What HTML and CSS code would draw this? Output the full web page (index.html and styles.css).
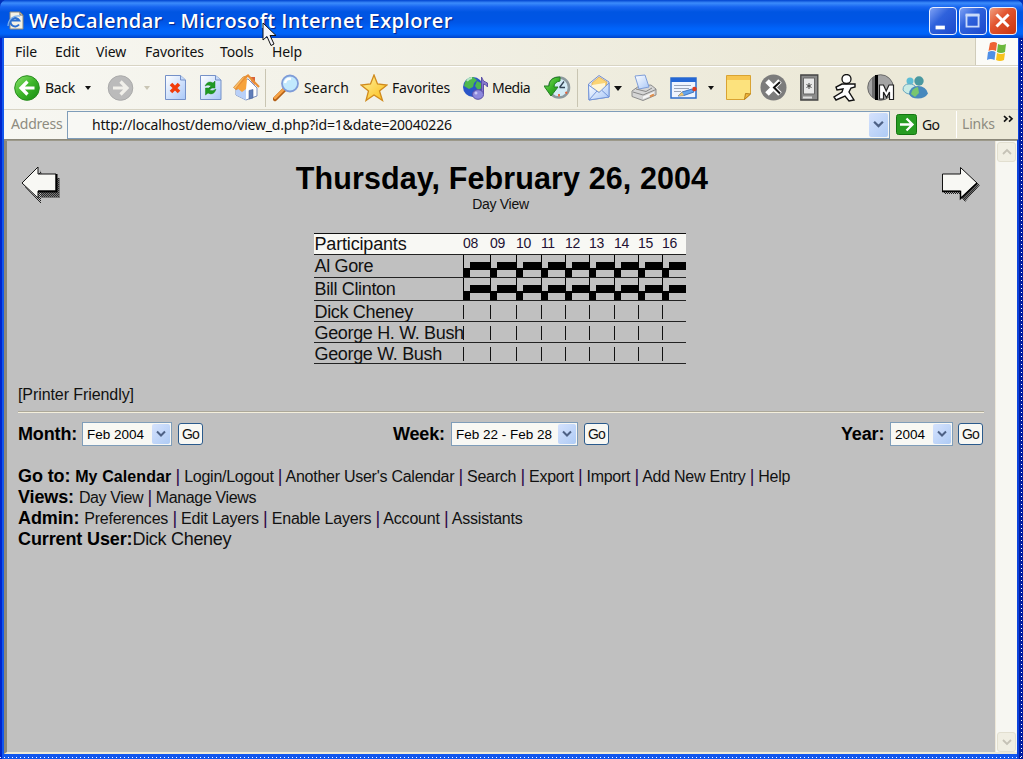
FILE: index.html
```html
<!DOCTYPE html>
<html lang="en">
<head>
<meta charset="utf-8">
<title>WebCalendar</title>
<link rel="stylesheet" href="styles.css">
</head>
<body>
<svg width="0" height="0" class="defs">
  <defs>
    <linearGradient id="green" x1="0" y1="0" x2="1" y2="1"><stop offset="0" stop-color="#8be36c"/><stop offset=".5" stop-color="#3cb529"/><stop offset="1" stop-color="#168a12"/></linearGradient>
    <linearGradient id="page" x1="0" y1="0" x2="1" y2="1"><stop offset="0" stop-color="#fff"/><stop offset="1" stop-color="#a9c8f8"/></linearGradient>
    <linearGradient id="gold" x1="0" y1="0" x2="1" y2="1"><stop offset="0" stop-color="#fff3a0"/><stop offset="1" stop-color="#fbbc16"/></linearGradient>
    <pattern id="dots" width="2" height="2" patternUnits="userSpaceOnUse"><path d="M0 0h1v1H0zM1 1h1v1H1z" fill="#222"/></pattern>
  </defs>
</svg>
<div class="window">
  <header class="titlebar">
    <svg class="app-icon" width="18" height="20" viewBox="0 0 18 20"><path d="M3 1h10l3 3v14H3z" fill="#f4f2e6" stroke="#8c8a80"/><path d="M13 1v3h3" fill="none" stroke="#666"/><path d="M12 13.500a4.600 4.200 0 1 1 .3-4H4" fill="none" stroke="#2a6fd0" stroke-width="2"/><path d="M1 15C1 8 7 4 13 5" fill="none" stroke="#7db1ee" stroke-width="1.300"/></svg>
    <h1 class="title">WebCalendar - Microsoft Internet Explorer</h1>
    <div class="controls">
      <span class="ctl"><svg viewBox="0 0 28 28"><path d="M6 19h10v4H6z" fill="#fff"/></svg></span>
      <span class="ctl"><svg viewBox="0 0 28 28"><path d="M7 8h13v12H7z" fill="none" stroke="#c9dafa" stroke-width="2"/><path d="M6 7.500h15" stroke="#c9dafa" stroke-width="3"/></svg></span>
      <span class="ctl close"><svg viewBox="0 0 28 28"><path d="M7 7l13 13M20 7L7 20" stroke="#fff" stroke-width="3.200"/></svg></span>
    </div>
  </header>
  <nav class="menubar">
    <span class="m1">File</span><span class="m2">Edit</span><span class="m3">View</span><span class="m4">Favorites</span><span class="m5">Tools</span><span class="m6">Help</span>
    <div class="brand"><svg width="24" height="22" viewBox="0 0 24 22"><path d="M5 2q4-2 7 0l-1 8q-4-2-7.500 0z" fill="#ee6334"/><path d="M13 3q4 2 8 0l-1 8q-4 2-8 0z" fill="#6bb83c"/><path d="M3 11q4-2 7.500 0l-1 8q-4-2-7.500 0z" fill="#4f8fe6"/><path d="M12 12q4 2 8 0l-1 7q-4 2-8 0z" fill="#f8c31c"/></svg></div>
  </nav>
  <div class="toolbar">
    <svg viewBox="0 0 28 28"><circle cx="13" cy="14" r="12.300" fill="url(#green)" stroke="#278c1d"/><path d="M20.500 14H8M13.500 7.500L7 14l6.500 6.500" fill="none" stroke="#fff" stroke-width="3.200"/></svg>
    <span class="lbl back">Back</span>
    <i class="caret"></i>
    <svg viewBox="0 0 28 28"><circle cx="13.500" cy="14" r="12.300" fill="#bbb" stroke="#aaa"/><path d="M6 14h13M13.500 7.500L20 14l-6.500 6.500" fill="none" stroke="#f1f0ea" stroke-width="3.200"/></svg>
    <i class="caret off"></i>
    <svg viewBox="0 0 28 28"><path d="M1.500 1.500h15l5 4.500v19.500h-20z" fill="url(#page)" stroke="#7591c8"/><path d="M16.500 1.500V6h5" fill="#c5daf9" stroke="#7591c8"/><path d="M7 10l8 8M15 10l-8 8" stroke="#f13c0c" stroke-width="3.600"/></svg>
    <svg viewBox="0 0 28 28"><path d="M.5 1.500h15l5.500 4.500v19.500H.5z" fill="url(#page)" stroke="#7591c8"/><path d="M15.500 1.500V6H21" fill="#c5daf9" stroke="#7591c8"/><path d="M5 12q3-6 8-3l2-2v7H9l2-2q-3-2-6 0zM16 15q-2 7-8 4l-2.500 2v-7h6l-2 2q3 2 6.500-1z" fill="#1f9a22" stroke="#16831a" stroke-width=".5"/></svg>
    <svg viewBox="0 0 28 28"><path d="M3 14l7-8 5-1 9 9v8l-11 4-10-5z" fill="#fff" stroke="#7a8fbe"/><path d="M3 14v7l10 5V14z" fill="#b9d0f8"/><path d="M16 16.500l4-1V24l-4 1z" fill="#5f7db9" stroke="#4a659c" stroke-width=".6"/><path d="M18 3h4v8l-4-4z" fill="#d8633a"/><path d="M.5 13.500L10 3l5-1.500L6 12l-3 3.500z" fill="#fbc067" stroke="#d08a3c" stroke-width=".8"/><path d="M3 15.500L12 4l3-2.500L26 13" fill="none" stroke="#e98f35" stroke-width="2.200"/><path d="M4 14l9-10 1 1-1 10-4 3z" fill="#f7a33b"/></svg>
    <i class="sep"></i>
    <svg viewBox="0 0 28 28"><path d="M2 25L12 15" stroke="#b35f16" stroke-width="4.500" stroke-linecap="round"/><path d="M2 24L11 15" stroke="#f7a345" stroke-width="2.500" stroke-linecap="round"/><circle cx="17" cy="9.500" r="8" fill="#c2e9fd" stroke="#7f9cd8" stroke-width="1.800"/><path d="M12 9q1-5 6-4" fill="none" stroke="#fff" stroke-width="2.500"/></svg>
    <span class="lbl search">Search</span>
    <svg viewBox="0 0 28 28"><path d="M14 1l3.500 9L27 11l-7.500 6 3 9.500-8.500-5.500-8 5.500 2.500-9.500L1 11l9.500-1z" fill="url(#gold)" stroke="#d08a1c" stroke-width="1.300"/></svg>
    <span class="lbl fav">Favorites</span>
    <svg viewBox="0 0 28 28"><circle cx="11" cy="13" r="10" fill="#2a55c8"/><path d="M3 8q3-5 8-5l4 3-3 3-1 4-4 2-5-3zM15 7l4 2 1 5-4 2-3-4z" fill="#4eb84d"/><path d="M5 7q2-3 5-3" stroke="#b7e7c5" stroke-width="2" fill="none"/><path d="M19.500 20V3q1 5 6 6v4q-2-3-4-3v10z" fill="#8577cf" stroke="#5b50a5"/><ellipse cx="16" cy="20.500" rx="5.500" ry="4.800" fill="#8d88dc" stroke="#5b50a5"/><circle cx="14" cy="19" r="1.500" fill="#c9c7f4"/></svg>
    <span class="lbl media">Media</span>
    <svg viewBox="0 0 28 28"><circle cx="15" cy="13.500" r="10" fill="#d4ecf6" stroke="#8d9a9f" stroke-width="2.600"/><path d="M15 20v2.500M21.500 18l1.500 1.500" stroke="#e6643b" stroke-width="1.800"/><path d="M16 3Q5 3 5 12H0l7 10 7-9h-4q0-5 6-6z" fill="url(#green)" stroke="#237f23"/><path d="M20 7.500l-4.500 6M15.500 13.500H21" fill="none" stroke="#345" stroke-width="1.300"/></svg>
    <i class="sep"></i>
    <svg viewBox="0 0 28 28"><path d="M1.500 10L12 1.500 22 8v15L2 26z" fill="#dce8fc" stroke="#7890cc"/><path d="M5 9l7-6 8 5-1 6-7 4-7-6z" fill="#fbd475" stroke="#d5a34d" stroke-width=".7"/><path d="M5 11l13-2v6l-6 3-7-5z" fill="#fff6d8"/><path d="M1.500 11l10.500 7.500L22 9v14L2 26z" fill="url(#page)" stroke="#7395d9"/><path d="M2 26l8-9M22 23l-7-6.500" fill="none" stroke="#7395d9"/></svg>
    <i class="caret big"></i>
    <svg viewBox="0 0 28 28"><path d="M1 17l7-5 12-1 5 4v6l-13 5.500-11-4z" fill="#d5d5d5" stroke="#8d8d8d"/><path d="M4 2l10-1 4 12-10 2z" fill="url(#page)" stroke="#7f9ed8"/><path d="M2 18l10 3 13-5.500M5 15l10 2.500 6-3.500" fill="none" stroke="#888"/><path d="M12 22.500l11-4.500v2.500l-11 4.500z" fill="#f6f6f6"/><path d="M19 22.500l4-2" stroke="#dd9050" stroke-width="2"/></svg>
    <svg viewBox="0 0 28 28"><path d="M1 4h25v20H1z" fill="#eef4ff" stroke="#2d6ccc" stroke-width="1.500"/><path d="M1 4h25v4H1z" fill="#2467d5"/><path d="M4 11.500h17M4 14.500h15M4 17.500h7" stroke="#9aa4b8"/><path d="M8 22l4-4 10-3 2 3-10 3.500z" fill="#65a5ed" stroke="#2c62b0" stroke-width=".8"/><path d="M8 22l4-4 2 3.500z" fill="#f0c46c"/><circle cx="24.500" cy="15" r="2.300" fill="#dc3d20"/></svg>
    <i class="caret note"></i>
    <svg viewBox="0 0 28 28"><path d="M.5 1.500h24V20l-6 5.500H.5z" fill="#fce27d" stroke="#d9a332"/><path d="M1 2h23v4H1z" fill="#f7c650"/><path d="M18.500 25.500l1-6 5 .5z" fill="#f1b63b" stroke="#b8801a"/></svg>
    <svg viewBox="0 0 28 28"><circle cx="13.500" cy="13.500" r="13" fill="#7c7c7c"/><path d="M7 7l13 13M20 7L7 20" stroke="#fff" stroke-width="5"/><path d="M20 8l-6 5.500 6 6" stroke="#111" stroke-width="2" fill="none"/></svg>
    <svg viewBox="0 0 28 28"><path d="M.8 1h17v25H.8z" fill="#8b8b8b" stroke="#444" stroke-width="1.300"/><path d="M3.500 4h11v16h-11z" fill="#e8e8e8" stroke="#666"/><path d="M9 9v6M6.500 10.500l5 3M11.500 10.500l-5 3" stroke="#444"/><path d="M3 23.500h9" stroke="#ddd" stroke-width="2"/></svg>
    <svg viewBox="0 0 28 28"><path d="M9 10l-6 3 1 3 6-1-1 3-8 5 2 3 9-4 4 5 5-1-5-8 2-4 4-1V10h-7z" fill="#fff" stroke="#111" stroke-width="1.400"/><circle cx="13.500" cy="5" r="4.500" fill="#fff" stroke="#111" stroke-width="1.300"/></svg>
    <svg viewBox="0 0 28 28"><circle cx="13.500" cy="13.500" r="12.800" fill="#a4a4a4" stroke="#555" stroke-width=".8"/><path d="M5 4l4-3v25l-4-3z" fill="#6c6c6c"/><path d="M9.500 1v25" stroke="#000" stroke-width="3"/><path d="M12.500 25V11h4l2.700 6 2.800-6h4.500v14.500h-4V18l-3 5.500-3-5.500v7z" fill="#fff" stroke="#222" stroke-width="1.200"/></svg>
    <svg viewBox="0 0 28 28"><circle cx="8" cy="7" r="3.500" fill="#5ebdd5"/><path d="M1 16q0-6 6-6t7 4l-3 6q-7 1-10-4z" fill="#c9ebe5" stroke="#6ba9c1"/><circle cx="17" cy="7" r="4.700" fill="#4a98a0"/><path d="M7 20q1-8 9-8 8 0 10 7.500-3 5-10 5-7 0-9-4.500z" fill="#4788bd"/><path d="M9 20q1-6 7-7l1 6-4 4z" fill="#79c66f"/></svg>
  </div>
  <div class="addressbar">
    <span class="addr-label">Address</span>
    <div class="addr-field"><span class="url">http://localhost/demo/view_d.php?id=1&amp;date=20040226</span><span class="drop"><svg viewBox="0 0 10 8"><path d="M1 1.500l4 4 4-4" fill="none" stroke="#4d6185" stroke-width="2"/></svg></span></div>
    <svg class="go-icon" viewBox="0 0 21 21"><rect x=".5" y=".5" width="20" height="20" rx="2" fill="#279c22" stroke="#137510"/><path d="M4 10.500h12M10.500 4.500l6 6-6 6" fill="none" stroke="#fff" stroke-width="2.300"/></svg>
    <span class="go-label">Go</span>
    <span class="links">Links</span><span class="more"><svg viewBox="0 0 11 8"><path d="M1 1l3 2.800L1 6.600M6 1l3 2.800-3 2.800" fill="none" stroke="#111" stroke-width="1.700"/></svg></span>
  </div>
  <div class="viewport">
    <main class="page">
      <div class="head">
        <svg width="40" height="40" viewBox="0 0 40 40"><path d="M4 22L20 6v7h18v19H20v7z" fill="url(#dots)"/><path d="M19 5l2 4v4h18v20H20V23z" fill="#333" opacity=".5"/><path d="M1 18L17 2v7h18v17H17v7z" fill="#f8f8f4" stroke="#111"/><path d="M17 26.500h18.500V9" fill="none" stroke="#000" stroke-width="2"/></svg>
        <div class="heading"><h2>Thursday, February 26, 2004</h2><p>Day View</p></div>
        <svg width="40" height="40" viewBox="0 0 40 40"><path d="M3 13h18V6l18 14-15 17-3-4v-4H3z" fill="url(#dots)"/><path d="M3 27h18v6l3 3 14-16-4-2-14 8z" fill="#333" opacity=".6"/><path d="M1.500 9h18V2.500L36 18 19.500 33.500V26h-18z" fill="#f8f8f4" stroke="#111"/><path d="M1 26.500h18.500v7L36 18" fill="none" stroke="#000" stroke-width="1.500"/></svg>
      </div>
      <div class="sched">
        <div class="row hdr"><b>Participants</b><i>08</i><i>09</i><i>10</i><i>11</i><i>12</i><i>13</i><i>14</i><i>15</i><i>16</i></div>
        <div class="row busy"><b>Al Gore</b><i></i><i></i><i></i><i></i><i></i><i></i><i></i><i></i><i></i></div>
        <div class="row busy"><b>Bill Clinton</b><i></i><i></i><i></i><i></i><i></i><i></i><i></i><i></i><i></i></div>
        <div class="row free"><b>Dick Cheney</b><i></i><i></i><i></i><i></i><i></i><i></i><i></i><i></i><i></i></div>
        <div class="row free"><b>George H. W. Bush</b><i></i><i></i><i></i><i></i><i></i><i></i><i></i><i></i><i></i></div>
        <div class="row free"><b>George W. Bush</b><i></i><i></i><i></i><i></i><i></i><i></i><i></i><i></i><i></i></div>
      </div>
      <p class="printer">[Printer Friendly]</p>
      <hr>
      <div class="forms">
        <div class="form"><strong class="month">Month:</strong><span class="select s1"><span>Feb 2004</span><em><svg viewBox="0 0 10 8"><path d="M1 1.500l4 4 4-4" fill="none" stroke="#4d6185" stroke-width="2"/></svg></em></span><button>Go</button></div>
        <div class="form"><strong class="week">Week:</strong><span class="select s2"><span>Feb 22 - Feb 28</span><em><svg viewBox="0 0 10 8"><path d="M1 1.500l4 4 4-4" fill="none" stroke="#4d6185" stroke-width="2"/></svg></em></span><button>Go</button></div>
        <div class="form"><strong class="year">Year:</strong><span class="select s3"><span>2004</span><em><svg viewBox="0 0 10 8"><path d="M1 1.500l4 4 4-4" fill="none" stroke="#4d6185" stroke-width="2"/></svg></em></span><button>Go</button></div>
      </div>
      <div class="navs">
        <p><strong>Go to:</strong> <span class="l1"><strong class="my">My Calendar</strong> <u>|</u> Login/Logout <u>|</u> Another User's Calendar <u>|</u> Search <u>|</u> Export <u>|</u> Import <u>|</u> Add New Entry <u>|</u> Help</span></p>
        <p><strong>Views:</strong> <span class="l2">Day View <u>|</u> Manage Views</span></p>
        <p><strong>Admin:</strong> <span class="l3">Preferences <u>|</u> Edit Layers <u>|</u> Enable Layers <u>|</u> Account <u>|</u> Assistants</span></p>
        <p><strong class="cu">Current User:</strong><span class="user">Dick Cheney</span></p>
      </div>
    </main>
    <div class="scroll"><span><svg viewBox="0 0 10 8"><path d="M1 6l4-4 4 4" fill="none" stroke="#c5c2b6" stroke-width="1.800"/></svg></span><span><svg viewBox="0 0 10 8"><path d="M1 2l4 4 4-4" fill="none" stroke="#c5c2b6" stroke-width="1.800"/></svg></span></div>
  </div>
</div>
<svg class="cursor" width="16" height="26" viewBox="0 0 16 26"><path d="M1 1v17l4-3.500 4 9 3-1.500-4-8.500h6z" fill="#f4f4f8" stroke="#111"/></svg>
</body>
</html>
```
FILE: styles.css
```css
* { box-sizing: border-box; }
body { margin: 0; width: 1023px; height: 759px; overflow: hidden; background: #0030b8; font-family: "Liberation Sans", Arial, sans-serif; color: #111; }
svg { display: block; }
.defs { position: absolute; }
h1, h2, p { margin: 0; }
i, b, em, u { font-style: normal; font-weight: 400; text-decoration: none; }
.window {
  width: 1023px; height: 759px; padding: 0 4px 5px 4px; display: flex; flex-direction: column; border-radius: 7px 7px 0 0;
  background:
    repeating-linear-gradient(90deg, #fff 0 1px, transparent 1px 4px) 0 757px / 1023px 1px no-repeat,
    repeating-linear-gradient(180deg, #fff 0 1px, transparent 1px 4px) 1021px 8px / 1px 751px no-repeat,
    linear-gradient(90deg, #0025cc 0 2px, #1257ee 2px 1017px, #0b42dc 1017px 1019px, #001ca0 1019px);
}
.titlebar { height: 38px; margin: 0 -4px; padding: 0 6px 0 7px; display: flex; align-items: center; border-radius: 7px 7px 0 0; background: linear-gradient(#0043cf 0, #3c8cfb 3px, #1765f0 7px, #0055e2 12px, #0055e6 22px, #0064fb 29px, #0063f8 34px, #0042c8 38px); }
.app-icon { margin: 3px 4px 0 0; }
.title { flex: 1; font: 600 20px/38px "Open Sans", sans-serif; letter-spacing: .36px; padding-top: 4px; color: #fff; text-shadow: 1px 1px 1px #0a1f80; white-space: nowrap; }
.controls { display: flex; gap: 2px; padding-top: 3px; }
.ctl { width: 28px; height: 28px; border: 1px solid #eaf0ff; border-radius: 4px; background: linear-gradient(135deg, #7fa2f5, #2f62dc 40%, #1c49cc); }
.ctl svg { width: 26px; height: 26px; }
.close { background: linear-gradient(135deg, #f0a081, #e2552f 40%, #c83310); }
.menubar { height: 28px; margin-right: 1px; padding-left: 11px; display: flex; align-items: center; font: 14px/27px "Noto Sans", sans-serif; letter-spacing: -.1px; background: linear-gradient(90deg, #f7f7f2, #ece9d8 80%); border-bottom: 1px solid #d8d4c4; }
.m1 { width: 40px; } .m2 { width: 41px; } .m3 { width: 49px; } .m4 { width: 75px; } .m5 { width: 52px; } .m6 { flex: 1; }
.brand { width: 43px; height: 27px; background: #fbfbf7; border-left: 1px solid #d0ccba; display: flex; align-items: center; justify-content: center; }
.toolbar {
  height: 44px; margin-right: 1px; padding-left: 10px; display: grid; align-items: center; border-top: 1px solid #fff; border-bottom: 1px solid #d8d4c4;
  grid-template-columns: 31px 40px 22px 37px 20px 36px 33px 32px 8px 31px 56px 32px 70px 30px 52px 33px 10px 27px 17px 39px 38px 18px 34px 40px 33px 34px 35px 30px;
  background: linear-gradient(90deg, #f7f7f2, #ece9d8 80%);
}
.toolbar svg { width: 28px; height: 28px; }
.lbl { font: 14px/20px "Noto Sans", sans-serif; white-space: nowrap; }
.back { letter-spacing: -.3px; }
.fav { letter-spacing: -.2px; }
.media { letter-spacing: -.5px; }
.search { letter-spacing: .1px; }
.caret { width: 0; height: 0; border: 3.5px solid transparent; border-top: 4px solid #111; border-bottom: 0; }
.caret.off { border-top-color: #c9c5b4; }
.caret.big { border-width: 5px 4.5px 0; }
.sep { width: 1px; height: 38px; background: #c9c5b2; }
.addressbar { height: 30px; margin-right: 1px; padding-left: 7px; display: flex; align-items: center; background: linear-gradient(90deg, #f7f7f2, #ece9d8 80%); border-bottom: 1px solid #8b887a; font: 14px/26px "Noto Sans", sans-serif; }
.addr-label { width: 56px; color: #8d8b80; letter-spacing: -.2px; padding-bottom: 1px; }
.addr-field { width: 823px; height: 28px; border: 1px solid #7f9db9; background: #f8f8f4; display: flex; justify-content: space-between; align-items: center; padding: 0 1px 0 24px; }
.url { letter-spacing: -.18px; padding-top: 1px; }
.drop { width: 19px; height: 24px; display: flex; align-items: center; justify-content: center; border-radius: 2px; background: linear-gradient(135deg, #d5e2fd, #aecbf5); }
.drop svg { width: 11px; height: 9px; }
.go-icon { width: 21px; height: 21px; margin-left: 6px; }
.go-label { margin-left: 5px; width: 34px; letter-spacing: -.6px; padding-top: 1px; }
.links { height: 27px; padding-left: 5px; width: 47px; border-left: 1px solid #fff; color: #8d8b80; letter-spacing: -.2px; }
.more { align-self: flex-start; padding-top: 5px; }
.more svg { width: 11px; height: 8px; }
.viewport { height: 614px; margin-right: 2px; display: flex; border-left: 3px solid #8b887a; border-top: 1px solid #9c998a; border-bottom: 2px solid #ece9d8; background: #f7f7f2; }
.page { width: 988px; height: 611px; padding: 0 11px 0 11px; background: #c0c0c0; }
.head { height: 92px; display: flex; justify-content: space-between; align-items: flex-start; padding: 24px 3px 0; }
.heading { text-align: center; margin-top: -8px; padding-left: 2px; }
.heading h2 { font: bold 30.5px/42px "Liberation Sans", sans-serif; letter-spacing: .1px; color: #000; white-space: nowrap; }
.heading p { font-size: 14px; line-height: 14px; letter-spacing: -.3px; padding-right: 3px; margin-top: -2px; }
.sched { width: 372px; margin-left: 296px; border-top: 1px solid #111; }
.row { display: grid; grid-template-columns: 149px 27px 26px 25px 24px 24px 25px 24px 24px 24px; border-bottom: 1px solid #222; height: 21px; }
.row b { font-size: 18px; line-height: 20px; letter-spacing: -.34px; padding-left: .5px; white-space: nowrap; }
.row.hdr b { letter-spacing: -.17px; }
.hdr { background: #f8f8f4; }
.hdr i { font-size: 14px; line-height: 19px; letter-spacing: -.4px; color: #221133; }
.busy { height: 23px; }
.busy b { line-height: 23px; }
.free b { line-height: 22px; }
.busy i { background: linear-gradient(#000, #000) 0 0 / 1px 22px no-repeat, linear-gradient(#000, #000) 0 13px / 7px 9px no-repeat, linear-gradient(#000, #000) 7px 7px / 100px 8px no-repeat; }
.free i { background: linear-gradient(#111, #111) 0 4px / 1px 14px no-repeat; }
.printer { font-size: 16px; line-height: 20px; letter-spacing: -.08px; margin-top: 21px; }
hr { width: 966px; margin: 6px 0 0; border: 0; border-top: 1px solid #aca899; border-bottom: 1px solid #f4efdc; height: 2px; }
.forms { height: 42px; display: grid; grid-template-columns: 375px 448px auto; }
.form { display: flex; align-items: center; font-size: 18px; letter-spacing: -.15px; color: #000; height: 42px; }
.month { width: 64px; } .week { width: 58px; } .year { width: 49px; }
.select { height: 24px; border: 1px solid #7f9db9; background: #f8f8f4; display: flex; align-items: center; justify-content: space-between; padding: 0 1px 0 4px; font-size: 13.5px; letter-spacing: 0; white-space: nowrap; }
.select em { width: 18px; height: 20px; display: flex; align-items: center; justify-content: center; background: linear-gradient(135deg, #d5e2fd, #aecbf5); border-radius: 2px; }
.select svg { width: 10px; height: 8px; }
.s1 { width: 90px; } .s2 { width: 127px; } .s3 { width: 63px; }
button { width: 25px; height: 22px; margin: 0 0 1px 6px; padding: 0; border: 1.5px solid #2a5a8c; border-radius: 3px; background: #f8f8f4; font: 14px/18px "Liberation Sans", sans-serif; letter-spacing: -.8px; color: #111; }
.s3 + button { margin-left: 5px; }
.navs { padding-top: 11px; font-size: 18px; line-height: 21px; letter-spacing: -.12px; white-space: nowrap; }
.navs p { height: 21px; }
.navs strong { color: #000; }
.navs span { font-size: 16px; }
.navs u { font-size: 18px; color: #2d0a4a; }
.navs .my { letter-spacing: .1px; }
.l1 { letter-spacing: -.26px; }
.l2 { letter-spacing: -.36px; }
.l3 { letter-spacing: -.21px; }
.navs .user { font-size: 18px; letter-spacing: -.3px; }
.scroll { width: 22px; height: 611px; padding: 1px 0 0; border-left: 1px solid #eee8d8; display: flex; flex-direction: column; align-items: center; justify-content: space-between; background: #f7f7f2; }
.scroll span { width: 19px; height: 20px; border: 1px solid #e2dfd0; border-radius: 3px; background: #f0eee2; display: flex; align-items: center; justify-content: center; }
.scroll svg { width: 10px; height: 8px; }
.cursor { position: absolute; left: 262px; top: 22px; }
```
